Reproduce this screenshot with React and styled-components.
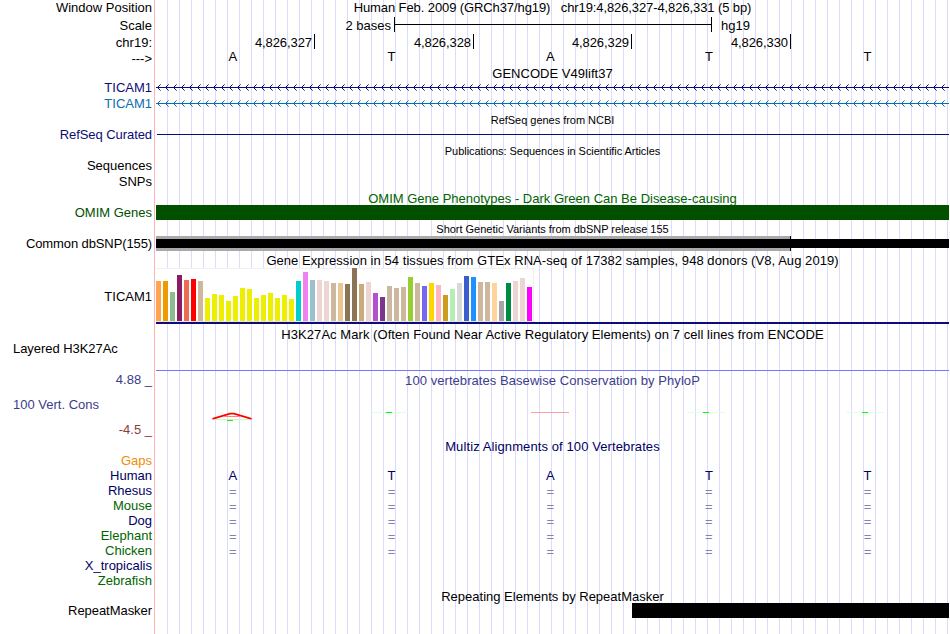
import { styled, createGlobalStyle } from "styled-components"

const labels = [
    { text: "Window Position", height: 16 },
    { text: "Scale", height: 18, top: 1 },
    { text: "chr19:", height: 18, top: -1 },
    { text: "--->", height: 14 },
    { text: "TICAM1", height: 15, top: 14, color: "#0c0c78" },
    { text: "TICAM1", height: 16, top: 1, color: "#0b6cb0" },
    { text: "RefSeq Curated", height: 15, top: 15, color: "#0c0c78", spacing: -0.07 },
    { text: "Sequences", height: 16, top: 16 },
    { text: "SNPs", height: 16 },
    { text: "OMIM Genes", height: 15, top: 15, color: "#005000" },
    { text: "Common dbSNP(155)", height: 15, top: 16, spacing: -0.11 },
    { text: "TICAM1", height: 56, top: 18 },
    { text: "Layered H3K27Ac", height: 16, top: 16, left: true, spacing: -0.05 },
    { text: "4.88 _", height: 16, top: 15, color: "#3c3c8c" },
    { text: "100 Vert. Cons", height: 16, top: 9, left: true, color: "#3c3c8c" },
    { text: "-4.5 _", height: 16, top: 9, color: "#8c3c3c" },
    { text: "Gaps", height: 15, top: 15, color: "#f08c00" },
    { text: "Human", height: 15, color: "#000064" },
    { text: "Rhesus", height: 15, color: "#000064" },
    { text: "Mouse", height: 15, color: "#006400" },
    { text: "Dog", height: 15, color: "#000064" },
    { text: "Elephant", height: 15, color: "#006400" },
    { text: "Chicken", height: 15, color: "#006400" },
    { text: "X_tropicalis", height: 15, color: "#000064" },
    { text: "Zebrafish", height: 15, color: "#006400" },
    { text: "RepeatMasker", height: 15, top: 15, spacing: -0.05 },
]

const positions = ["4,826,327", "4,826,328", "4,826,329", "4,826,330"]
const bases = ["A", "T", "A", "T", "T"]
const species = ["Rhesus", "Mouse", "Dog", "Elephant", "Chicken"]

// [height, color] for each of the 54 tissues
const tissues = [
    [40, "#ffa54f"], [40, "#ee9a00"], [29, "#8fbc8f"], [46, "#8b1c62"], [41, "#ee6a50"], [42, "#ff0000"],
    [40, "#cdb79e"], [23, "#eeee00"], [27, "#eeee00"], [26, "#eeee00"], [20, "#eeee00"], [25, "#eeee00"],
    [33, "#eeee00"], [32, "#eeee00"], [23, "#eeee00"], [26, "#eeee00"], [28, "#eeee00"], [23, "#eeee00"],
    [26, "#eeee00"], [22, "#eeee00"], [40, "#00cdcd"], [49, "#ee82ee"], [41, "#9ac0cd"], [41, "#eed5d2"],
    [40, "#eed5d2"], [38, "#cdb79e"], [38, "#eec591"], [37, "#8b7355"], [53, "#8b7355"], [37, "#cdaa7d"],
    [39, "#eed5d2"], [28, "#b452cd"], [24, "#7a378b"], [35, "#cdb79e"], [33, "#cdb79e"], [34, "#cdb79e"],
    [44, "#9acd32"], [38, "#cdb79e"], [35, "#7a67ee"], [38, "#ffd700"], [36, "#ffb6c1"], [26, "#cd9b1d"],
    [32, "#b4eeb4"], [38, "#d9d9d9"], [45, "#3a5fcd"], [44, "#1e90ff"], [39, "#cdb79e"], [39, "#cdb79e"],
    [38, "#ffd39b"], [20, "#a6a6a6"], [38, "#008b45"], [40, "#eed5d2"], [43, "#eed5d2"], [34, "#ff00ff"],
]

function GeneArrows(props){
    const { color, top } = props
    const tips = Array.from({ length: 99 }, (_, i) => 1 + i * 8)

    return(
        <Drawing $top={top} width="793" height="7" shapeRendering="crispEdges">
            <rect x="0" y="3" width="793" height="1" fill={color}/>
            {tips.map((x) => (
                <g key={x} fill={color}>
                    <rect x={x + 1} y="2" width="1" height="3"/>
                    <rect x={x + 2} y="1" width="1" height="1"/>
                    <rect x={x + 2} y="5" width="1" height="1"/>
                    <rect x={x + 3} y="0" width="1" height="1" opacity="0.6"/>
                    <rect x={x + 3} y="6" width="1" height="1" opacity="0.6"/>
                </g>
            ))}
        </Drawing>
    )
}

function Conservation(){
    return(
        <Drawing $top={23} width="793" height="10">
            <path d="M56.5 6.8 L74 1.7 H78 L95.5 6.8" fill="none" stroke="#ff0000" strokeWidth="1.8"/>
            <rect x="68" y="4" width="16" height="1" fill="#ff8080"/>
            <rect x="58" y="7" width="36" height="1" fill="#d2f5c8"/>
            <rect x="71" y="8" width="6" height="1" fill="#00ff00"/>
            <rect x="375" y="0" width="38" height="1" fill="#ffa0a0"/>
            {[214, 531, 690].map((x) => (
                <g key={x}>
                    <rect x={x} y="0" width="38" height="1" fill="#e1ffe1"/>
                    <rect x={x + 16} y="0" width="6" height="1" fill="#00ff00"/>
                </g>
            ))}
        </Drawing>
    )
}

export default function App(){
    return(
        <Browser>
            <GlobalStyle/>
            <Labels>
                {labels.map((label, i) => (
                    <Label key={i} $height={label.height} $top={label.top} $color={label.color} $left={label.left} $spacing={label.spacing}>
                        {label.text}
                    </Label>
                ))}
            </Labels>
            <Tracks>
                <Title $height={16} $spacing={-0.1}>Human Feb. 2009 (GRCh37/hg19) &nbsp; chr19:4,826,327-4,826,331 (5 bp)</Title>
                <ScaleRow>
                    <ScaleText $width={238} $right>2 bases</ScaleText>
                    <ScaleBar><ScaleLine/></ScaleBar>
                    <ScaleText>hg19</ScaleText>
                </ScaleRow>
                <PositionRow>
                    {positions.map((position) => <Position key={position}>{position}</Position>)}
                </PositionRow>
                <BaseRow $height={16}>
                    {bases.map((base, i) => <Base key={i}>{base}</Base>)}
                </BaseRow>

                <Title $height={18} $spacing={0.03}>GENCODE V49lift37</Title>
                <GeneArrows color="#0c0c78" top={1}/>
                <GeneArrows color="#0b6cb0" top={9}/>

                <Title $height={15} $top={6} $small $spacing={-0.03}>RefSeq genes from NCBI</Title>
                <CuratedLine/>
                <Title $height={15} $top={9} $small $spacing={-0.05}>Publications: Sequences in Scientific Articles</Title>

                <Title $height={14} $top={32} $color="#006400" $line={16}>OMIM Gene Phenotypes - Dark Green Can Be Disease-causing</Title>
                <OmimBar/>

                <Title $height={14} $top={2} $small $spacing={-0.02}>Short Genetic Variants from dbSNP release 155</Title>
                <SnpRow>
                    <SnpInsertion/>
                    <SnpBar/>
                </SnpRow>

                <Title $height={15} $top={2} $line={15} $spacing={0.055}>Gene Expression in 54 tissues from GTEx RNA-seq of 17382 samples, 948 donors (V8, Aug 2019)</Title>
                <Expression>
                    {tissues.map(([height, color], i) => <Tissue key={i} $height={height} $color={color}/>)}
                </Expression>
                <ExpressionBase/>

                <Title $height={18} $top={2} $spacing={0.055}>H3K27Ac Mark (Often Found Near Active Regulatory Elements) on 7 cell lines from ENCODE</Title>
                <MarkLine/>

                <Title $height={16} $top={2} $color="#3c3c8c" $spacing={0.06}>100 vertebrates Basewise Conservation by PhyloP</Title>
                <Conservation/>

                <Title $height={16} $top={17} $color="#000064" $spacing={0.1}>Multiz Alignments of 100 Vertebrates</Title>
                <BaseRow $height={16} $top={13} $color="#000064">
                    {bases.map((base, i) => <Base key={i}>{base}</Base>)}
                </BaseRow>
                {species.map((name) => (
                    <BaseRow key={name} $height={15} $color="#8282b4">
                        {bases.map((_, i) => <Base key={i}>=</Base>)}
                    </BaseRow>
                ))}

                <Title $height={15} $top={30}>Repeating Elements by RepeatMasker</Title>
                <RepeatBar/>
            </Tracks>
        </Browser>
    )
}


const GlobalStyle = createGlobalStyle`
    body {
        margin: 0;
        background-color: #ffffff;
        font-family: 'Liberation Sans', Arial, sans-serif;
        font-size: 13px;
        color: #000000;
    }
`
const Browser = styled.div`
    display: flex;
    width: 950px;
    height: 634px;
    overflow: hidden;
`
const Labels = styled.div`
    box-sizing: border-box;
    display: flex;
    flex-direction: column;
    width: 155px;
    flex-shrink: 0;
    padding-right: 2px;
    border-right: 1px solid #ffb4b4;
`
const Label = styled.div`
    flex-shrink: 0;
    height: ${(props) => props.$height}px;
    line-height: ${(props) => props.$height}px;
    margin-top: ${(props) => props.$top || 0}px;
    padding-left: 13px;
    text-align: ${(props) => props.$left ? "left" : "right"};
    letter-spacing: ${(props) => props.$spacing || 0}px;
    color: ${(props) => props.$color || "#000000"};
    white-space: pre;
`
const Tracks = styled.div`
    display: flex;
    flex-direction: column;
    width: 793px;
    margin-left: 1px;
    background: repeating-linear-gradient(to right, transparent 0 11px, #dcdcfa 11px 12px);
`
const Title = styled.div`
    flex-shrink: 0;
    height: ${(props) => props.$height}px;
    line-height: ${(props) => props.$line || props.$height}px;
    margin-top: ${(props) => props.$top || 0}px;
    overflow: hidden;
    font-size: ${(props) => props.$small ? 11 : 13}px;
    letter-spacing: ${(props) => props.$spacing || 0}px;
    text-align: center;
    color: ${(props) => props.$color || "#000000"};
    white-space: nowrap;
`
const ScaleRow = styled.div`
    display: flex;
    height: 16px;
    margin: 1px 0;
`
const ScaleText = styled.div`
    box-sizing: border-box;
    width: ${(props) => props.$width ? props.$width + "px" : "auto"};
    padding: ${(props) => props.$right ? "0 3px 0 0" : "0 0 0 9px"};
    text-align: ${(props) => props.$right ? "right" : "left"};
    line-height: 17px;
`
const ScaleBar = styled.div`
    box-sizing: border-box;
    width: 318px;
    height: 15px;
    padding-top: 7px;
    border-left: 1px solid #000000;
    border-right: 1px solid #000000;
`
const ScaleLine = styled.div`
    height: 1px;
    background-color: #000000;
`
const PositionRow = styled.div`
    display: grid;
    grid-template-columns: 159px 159px 158px 159px;
    height: 15px;
`
const Position = styled.div`
    height: 15px;
    padding-right: 2px;
    border-right: 1px solid #000000;
    text-align: right;
    letter-spacing: -0.08px;
    line-height: 18px;
`
const BaseRow = styled.div`
    display: grid;
    grid-template-columns: repeat(5, 158.7px);
    width: 788px;
    height: ${(props) => props.$height}px;
    line-height: ${(props) => props.$height}px;
    margin-top: ${(props) => props.$top || 0}px;
    color: ${(props) => props.$color || "#000000"};
`
const Base = styled.div`
    padding-right: 5px;
    text-align: center;
`
const Drawing = styled.svg`
    display: block;
    flex-shrink: 0;
    margin-top: ${(props) => props.$top}px;
`
const CuratedLine = styled.div`
    height: 1px;
    margin: 6px 0 0 1px;
    background-color: #0c0c78;
`
const OmimBar = styled.div`
    height: 15px;
    background-color: #005000;
`
const SnpRow = styled.div`
    display: flex;
    align-items: center;
    height: 15px;
`
const SnpInsertion = styled.div`
    box-sizing: border-box;
    width: 635px;
    height: 15px;
    border-right: 1px solid #000000;
    background: linear-gradient(#a9a9a9 3px, #000000 3px 12px, #a9a9a9 12px);
`
const SnpBar = styled.div`
    flex: 1;
    height: 9px;
    background-color: #000000;
`
const Expression = styled.div`
    box-sizing: border-box;
    display: flex;
    align-items: flex-end;
    gap: 2px;
    width: 378px;
    height: 54px;
    background-color: #ffffff;
    border-bottom: 1px solid #e6e6e6;
    box-shadow: inset 0 1px #f0f0f0, inset -1px 0 #f0f0f0;
`
const Tissue = styled.div`
    width: 5px;
    height: ${(props) => props.$height}px;
    background-color: ${(props) => props.$color};
`
const ExpressionBase = styled.div`
    height: 2px;
    background-color: #0c0c78;
`
const MarkLine = styled.div`
    height: 1px;
    margin-top: 26px;
    background-color: #7878ff;
`
const RepeatBar = styled.div`
    height: 15px;
    margin: -1px 0 0 476px;
    background-color: #000000;
`
